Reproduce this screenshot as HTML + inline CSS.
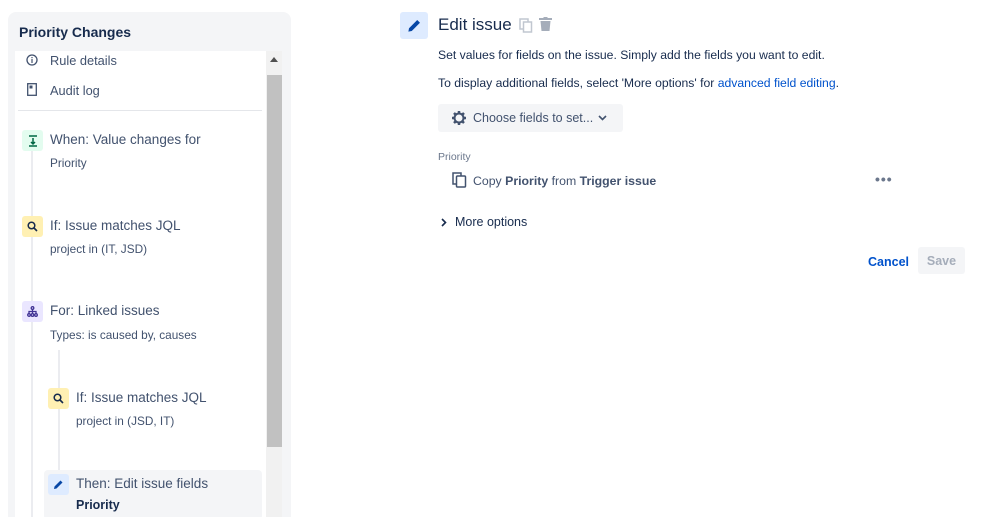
<!DOCTYPE html>
<html style="overflow:hidden;height:517px"><head><style>
*{box-sizing:border-box;margin:0;padding:0}
body{width:999px;height:517px;overflow:hidden;background:#fff;font-family:"Liberation Sans",sans-serif;color:#172b4d;position:relative}
.abs{position:absolute}
.panel{left:8px;top:12px;width:283px;height:520px;background:#f4f5f7;border-radius:8px}
.inner{left:15px;top:51px;width:251px;height:470px;background:#fff}
.sb{left:266px;top:51px;width:16px;height:470px;background:#f1f1f1}
.thumb{left:267px;top:75px;width:15px;height:372px;background:#c1c1c1}
.t{font-size:13.5px;color:#42526e}
.s{font-size:11.8px;color:#42526e}
.ic{width:21px;height:21px;border-radius:3px;display:flex;align-items:center;justify-content:center}
.vl{width:2px;background:#ebecf0}
</style></head><body>
<div class="abs panel"></div>
<div class="abs" style="left:19px;top:24px;font-size:14px;font-weight:bold;color:#172b4d">Priority Changes</div>
<div class="abs inner"></div>
<div class="abs sb"></div>
<div class="abs" style="left:270px;top:57px;width:0;height:0;border-left:4px solid transparent;border-right:4px solid transparent;border-bottom:5px solid #505050"></div>
<div class="abs thumb"></div>
<svg class="abs" style="left:26px;top:54px" width="12" height="12" viewBox="0 0 12 12"><circle cx="6" cy="6" r="5" fill="none" stroke="#42526e" stroke-width="1.3"/><rect x="5.4" y="5" width="1.2" height="4" fill="#42526e"/><rect x="5.4" y="3" width="1.2" height="1.2" fill="#42526e"/></svg>
<div class="abs t" style="left:50px;top:53px;font-size:12.8px">Rule details</div>
<svg class="abs" style="left:27px;top:83px" width="10" height="13" viewBox="0 0 10 13"><rect x="0.7" y="0.7" width="8.6" height="11.6" fill="none" stroke="#42526e" stroke-width="1.3"/><rect x="2.5" y="2.5" width="3" height="3" fill="#42526e"/></svg>
<div class="abs t" style="left:50px;top:83px;font-size:12.8px">Audit log</div>
<div class="abs" style="left:18px;top:110px;width:244px;height:1px;background:#e4e6ea"></div>
<div class="abs vl" style="left:31px;top:150px;height:370px"></div>
<div class="abs vl" style="left:58px;top:350px;height:170px"></div>
<div class="abs ic" style="left:22px;top:130px;background:#e3fcef"><svg width="10" height="12" viewBox="0 0 10 12"><path d="M1 1H9M5 3V9M3 7L5 9L7 7M1 11H9" stroke="#006644" stroke-width="1.5" fill="none"/></svg></div>
<div class="abs t" style="left:50px;top:132px">When: Value changes for</div>
<div class="abs s" style="left:50px;top:156px">Priority</div>
<div class="abs ic" style="left:22px;top:216px;background:#fff0b3"><svg width="11" height="11" viewBox="0 0 11 11"><circle cx="4.5" cy="4.5" r="3.3" fill="none" stroke="#172b4d" stroke-width="1.5"/><path d="M7 7L10 10" stroke="#172b4d" stroke-width="1.6"/></svg></div>
<div class="abs t" style="left:50px;top:218px">If: Issue matches JQL</div>
<div class="abs s" style="left:50px;top:242px">project in (IT, JSD)</div>
<div class="abs ic" style="left:22px;top:301px;background:#eae6ff"><svg width="11" height="11" viewBox="0 0 11 11" fill="none" stroke="#403294" stroke-width="1.3"><circle cx="5.5" cy="2" r="1.3"/><circle cx="2" cy="9" r="1.3"/><circle cx="9" cy="9" r="1.3"/><circle cx="5.5" cy="9" r="1.3"/><path d="M5.5 3.3V7.7M2 7.7V5.5H9V7.7"/></svg></div>
<div class="abs t" style="left:50px;top:303px">For: Linked issues</div>
<div class="abs s" style="left:50px;top:328px">Types: is caused by, causes</div>
<div class="abs ic" style="left:48px;top:388px;background:#fff0b3"><svg width="11" height="11" viewBox="0 0 11 11"><circle cx="4.5" cy="4.5" r="3.3" fill="none" stroke="#172b4d" stroke-width="1.5"/><path d="M7 7L10 10" stroke="#172b4d" stroke-width="1.6"/></svg></div>
<div class="abs t" style="left:76px;top:390px">If: Issue matches JQL</div>
<div class="abs s" style="left:76px;top:414px">project in (JSD, IT)</div>
<div class="abs" style="left:44px;top:470px;width:218px;height:50px;background:#f4f5f7;border-radius:4px"></div>
<div class="abs ic" style="left:48px;top:474px;background:#deebff"><svg width="11" height="11" viewBox="0 0 11 11"><path d="M1 10L1.5 7.5L7.5 1.5L9.5 3.5L3.5 9.5Z" fill="#0747a6"/></svg></div>
<div class="abs t" style="left:76px;top:476px">Then: Edit issue fields</div>
<div class="abs" style="left:76px;top:498px;font-size:12.5px;font-weight:bold;color:#172b4d">Priority</div>

<div class="abs" style="left:400px;top:12px;width:28px;height:27px;background:#deebff;border-radius:3px;display:flex;align-items:center;justify-content:center"><svg width="15" height="15" viewBox="0 0 11 11"><path d="M1 10L1.5 7.5L7.5 1.5L9.5 3.5L3.5 9.5Z" fill="#0747a6"/></svg></div>
<div class="abs" style="left:438px;top:15px;font-size:17px;color:#172b4d">Edit issue</div>
<svg class="abs" style="left:519px;top:18px" width="14" height="15" viewBox="0 0 14 15"><rect x="1" y="1" width="8" height="10" fill="none" stroke="#c1c7d0" stroke-width="1.5"/><rect x="4.5" y="4" width="8" height="10" fill="#fff" stroke="#c1c7d0" stroke-width="1.5"/></svg>
<svg class="abs" style="left:539px;top:17px" width="13" height="15" viewBox="0 0 13 15"><rect x="0" y="1" width="13" height="2" fill="#a5adba"/><rect x="4.5" y="0" width="4" height="2" fill="#a5adba"/><path d="M1.5 4H11.5L10.5 14H2.5Z" fill="#a5adba"/></svg>
<div class="abs" style="left:438px;top:48px;font-size:12.2px;color:#172b4d">Set values for fields on the issue. Simply add the fields you want to edit.</div>
<div class="abs" style="left:438px;top:76px;font-size:12.2px;color:#172b4d">To display additional fields, select 'More options' for <span style="color:#0052cc">advanced field editing</span>.</div>
<div class="abs" style="left:438px;top:104px;width:185px;height:28px;background:#f4f5f7;border-radius:3px"></div>
<svg class="abs" style="left:451px;top:110px" width="16" height="16" viewBox="0 0 16 16"><circle cx="8" cy="8" r="4.5" fill="none" stroke="#42526e" stroke-width="2"/><g stroke="#42526e" stroke-width="2.5"><path d="M8 1V3.5M8 12.5V15M1 8H3.5M12.5 8H15M3 3L4.8 4.8M11.2 11.2L13 13M13 3L11.2 4.8M4.8 11.2L3 13"/></g></svg>
<div class="abs" style="left:473px;top:111px;font-size:12.5px;color:#42526e">Choose fields to set...</div>
<svg class="abs" style="left:598px;top:115px" width="9" height="6" viewBox="0 0 9 6"><path d="M1 1L4.5 4.5L8 1" stroke="#42526e" stroke-width="1.6" fill="none"/></svg>
<div class="abs" style="left:438px;top:151px;font-size:10.5px;color:#6b778c">Priority</div>
<svg class="abs" style="left:452px;top:172px" width="15" height="16" viewBox="0 0 15 16"><rect x="1" y="1" width="8" height="11" fill="none" stroke="#42526e" stroke-width="1.5"/><rect x="4.5" y="4" width="9" height="11" rx="1" fill="#fff" stroke="#42526e" stroke-width="1.5"/></svg>
<div class="abs" style="left:473px;top:174px;font-size:12.3px;color:#42526e">Copy <b style="color:#42526e">Priority</b> from <b>Trigger issue</b></div>
<div class="abs" style="left:875px;top:171px;font-size:14px;font-weight:bold;color:#6b778c;letter-spacing:1px">•••</div>
<svg class="abs" style="left:441px;top:218px" width="6" height="9" viewBox="0 0 6 9"><path d="M1 1L4.5 4.5L1 8" stroke="#172b4d" stroke-width="1.6" fill="none"/></svg>
<div class="abs" style="left:455px;top:215px;font-size:12.5px;color:#172b4d">More options</div>
<div class="abs" style="left:868px;top:255px;font-size:12.5px;font-weight:bold;color:#0052cc">Cancel</div>
<div class="abs" style="left:918px;top:247px;width:47px;height:27px;background:#f4f5f7;border-radius:3px;font-size:12.5px;color:#a5adba;display:flex;align-items:center;justify-content:center;font-weight:bold">Save</div>
</body></html>
